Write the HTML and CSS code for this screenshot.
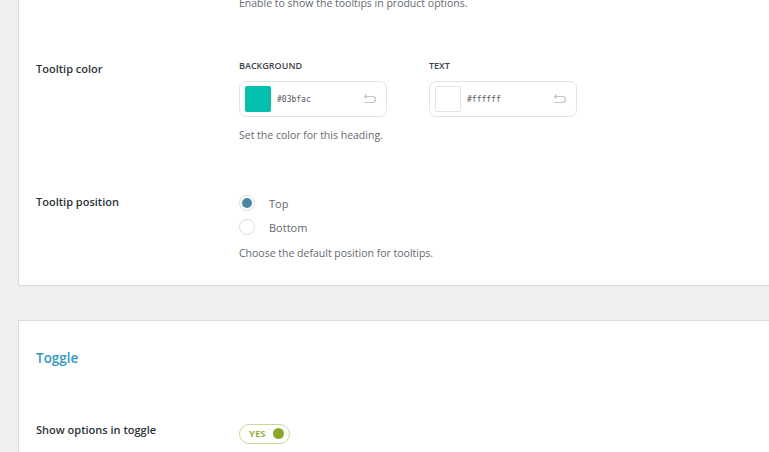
FILE: index.html
```html
<!DOCTYPE html>
<html lang="en">
<head>
  <meta charset="UTF-8">
  <title>Tooltip settings</title>
  <link rel="stylesheet" href="styles.css">
</head>
<body>

<div class="wrap">

  <div class="card card-first">
    <div class="field field-tail">
      <div class="field-label"></div>
      <div class="field-control">
        <p class="hint">Enable to show the tooltips in product options.</p>
      </div>
    </div>

    <div class="field field-color">
      <div class="field-label">Tooltip color</div>
      <div class="field-control">
        <div class="color-pair">
          <div class="color-item">
            <div class="color-caption">BACKGROUND</div>
            <div class="color-box">
              <span class="swatch" style="background:#03bfac"></span>
              <span class="color-code">#03bfac</span>
              <svg class="reset" width="15" height="10" viewBox="0 0 15 10">
                <path d="M3 2.5 H10.5 a3 3 0 0 1 0 6 H2.5 M4.5 0.5 L2.5 2.5 L4.5 4.5" fill="none" stroke="#c3c4c7" stroke-width="1.2"/>
              </svg>
            </div>
          </div>
          <div class="color-item">
            <div class="color-caption">TEXT</div>
            <div class="color-box">
              <span class="swatch swatch-light" style="background:#ffffff"></span>
              <span class="color-code">#ffffff</span>
              <svg class="reset" width="15" height="10" viewBox="0 0 15 10">
                <path d="M3 2.5 H10.5 a3 3 0 0 1 0 6 H2.5 M4.5 0.5 L2.5 2.5 L4.5 4.5" fill="none" stroke="#c3c4c7" stroke-width="1.2"/>
              </svg>
            </div>
          </div>
        </div>
        <p class="hint">Set the color for this heading.</p>
      </div>
    </div>

    <div class="field field-position">
      <div class="field-label">Tooltip position</div>
      <div class="field-control">
        <div class="radio-list">
          <label class="radio"><span class="radio-dot checked"></span>Top</label>
          <label class="radio"><span class="radio-dot"></span>Bottom</label>
        </div>
        <p class="hint">Choose the default position for tooltips.</p>
      </div>
    </div>
  </div>

  <div class="card card-second">
    <h3 class="section-title">Toggle</h3>

    <div class="field field-toggle">
      <div class="field-label">Show options in toggle</div>
      <div class="field-control">
        <span class="toggle">YES<span class="toggle-knob"></span></span>
      </div>
    </div>
  </div>

</div>

</body>
</html>
```

FILE: styles.css
```css
body {
  margin: 0;
  background: #f0f0f1;
  font-family: "Open Sans", Arial, sans-serif;
  color: #1d2327;
  overflow: hidden;
}

.wrap {
  padding-left: 18px;
  margin-right: -40px;
}

.card {
  background: #fff;
  border: 1px solid #dcdcde;
  padding-left: 17px;
}

.card-first {
  margin-top: -16px;
  padding-top: 10px;
  padding-bottom: 24px;
}

.card-second {
  margin-top: 34px;
  padding-top: 27px;
  padding-bottom: 40px;
}

.field {
  display: flex;
}

.field-label {
  width: 203px;
  flex-shrink: 0;
  font-size: 11px;
  font-weight: 600;
  line-height: 18px;
  color: #2c3338;
}

.field-control {
  flex: 1;
}

.field-color {
  margin-top: 49px;
}

.field-position {
  margin-top: 51px;
}

.field-position .field-label {
  line-height: 16px;
}

.hint {
  margin: 10px 0 0;
  font-size: 10.5px;
  line-height: 16px;
  color: #646970;
}

.field-tail .hint {
  margin-top: 0;
}

.color-pair {
  display: flex;
  gap: 42px;
}

.color-caption {
  font-size: 9px;
  font-weight: 600;
  line-height: 12px;
  color: #3c434a;
  margin-bottom: 9px;
}

.color-box {
  width: 148px;
  height: 36px;
  box-sizing: border-box;
  border: 1px solid #e2e4e7;
  border-radius: 7px;
  display: flex;
  align-items: center;
  padding: 0 9px 0 5px;
}

.swatch {
  width: 26px;
  height: 26px;
  border-radius: 2px;
  flex-shrink: 0;
}

.swatch-light {
  box-sizing: border-box;
  border: 1px solid #e2e4e7;
}

.color-code {
  flex: 1;
  margin-left: 6px;
  font-family: "DejaVu Sans Mono", monospace;
  font-size: 8px;
  color: #50575e;
}

.reset {
  display: block;
}

.radio-list {
  margin-top: 1px;
  display: flex;
  flex-direction: column;
  gap: 8px;
}

.radio {
  display: flex;
  align-items: center;
  height: 16px;
  font-size: 11px;
  color: #646970;
}

.radio-dot {
  width: 16px;
  height: 16px;
  box-sizing: border-box;
  border: 1px solid #e0e0e3;
  border-radius: 50%;
  margin-right: 14px;
  display: flex;
  align-items: center;
  justify-content: center;
}

.radio-dot.checked::after {
  content: "";
  width: 10px;
  height: 10px;
  border-radius: 50%;
  background: #4a87a6;
}

.section-title {
  margin: 0;
  font-size: 13.5px;
  font-weight: 600;
  line-height: 20px;
  color: #3399c3;
}

.field-toggle {
  margin-top: 52px;
}

.field-toggle .field-label {
  line-height: 20px;
}

.toggle {
  display: inline-flex;
  align-items: center;
  height: 20px;
  width: 51px;
  box-sizing: border-box;
  border: 1px solid #c8d99a;
  border-radius: 10px;
  padding: 0 5px 0 9px;
  font-size: 9.5px;
  font-weight: 700;
  color: #97b142;
  justify-content: space-between;
}

.toggle-knob {
  width: 11px;
  height: 11px;
  border-radius: 50%;
  background: #8ca82c;
}
```
